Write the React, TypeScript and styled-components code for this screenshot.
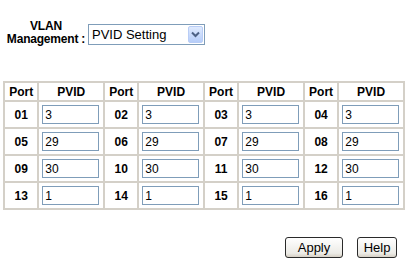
import React from "react";
import styled, { createGlobalStyle } from "styled-components";

const GlobalStyle = createGlobalStyle`
  body {
    margin: 0;
    background: #ffffff;
    font-family: "Liberation Sans", Arial, sans-serif;
  }
`;

const Page = styled.div`
  width: 407px;
  padding: 20px 0 0 3px;
  box-sizing: border-box;
`;

const SelectRow = styled.div`
  display: flex;
  align-items: center;
  padding-left: 3px;
`;

const Label = styled.div`
  width: 80px;
  font-size: 12px;
  font-weight: 700;
  line-height: 13px;
  text-align: center;
  color: #000;
  margin-right: 2px;
  letter-spacing: -0.2px;
`;

const SelectBox = styled.div`
  display: flex;
  align-items: center;
  width: 117px;
  height: 21px;
  box-sizing: border-box;
  border: 1px solid #7f9db9;
  background: #fff;
  padding: 1px;
  margin-top: 2px;
`;

const SelectText = styled.span`
  flex: 1;
  font-size: 13px;
  padding-left: 2px;
  color: #000;
`;

const DropButton = styled.span`
  width: 15px;
  height: 17px;
  box-sizing: border-box;
  border: 1px solid #b9cdf6;
  border-radius: 2px;
  background: linear-gradient(#dfeafe, #b6cdf9);
  display: flex;
  align-items: center;
  justify-content: center;
`;

const Table = styled.table`
  margin-top: 35px;
  border: 1px solid #d4d0c8;
  border-spacing: 0;
  border-collapse: separate;
  width: 402px;
`;

const Head = styled.th`
  border: 1px solid #d4d0c8;
  font-size: 12px;
  font-weight: 700;
  height: 17px;
  padding: 0;
  width: ${(p: { $wide?: boolean }) => (p.$wide ? "64px" : "33px")};
`;

const PortCell = styled.td`
  border: 1px solid #d4d0c8;
  font-size: 12px;
  font-weight: 700;
  text-align: center;
  height: 25px;
  padding: 0;
`;

const InputCell = styled.td`
  border: 1px solid #d4d0c8;
  padding: 0 0 0 3px;
`;

const PvidInput = styled.input`
  width: 57px;
  height: 19px;
  box-sizing: border-box;
  border: 1px solid #7f9db9;
  font-family: "Liberation Sans", Arial, sans-serif;
  font-size: 12px;
  padding: 0 2px;
  color: #000;
  outline: none;
`;

const ButtonRow = styled.div`
  display: flex;
  justify-content: flex-end;
  gap: 14px;
  padding-right: 10px;
  margin-top: 27px;
`;

const Button = styled.button`
  height: 21px;
  width: ${(p: { $w: number }) => p.$w}px;
  border: 1px solid #2a2a2a;
  border-radius: 3px;
  background: linear-gradient(#ffffff, #ecebe6 80%, #d6d0c5);
  font-family: "Liberation Sans", Arial, sans-serif;
  font-size: 13px;
  color: #000;
  padding: 0;
`;

const rows = [
  [["01", "3"], ["02", "3"], ["03", "3"], ["04", "3"]],
  [["05", "29"], ["06", "29"], ["07", "29"], ["08", "29"]],
  [["09", "30"], ["10", "30"], ["11", "30"], ["12", "30"]],
  [["13", "1"], ["14", "1"], ["15", "1"], ["16", "1"]],
];

export default function App() {
  return (
    <Page>
      <GlobalStyle />
      <SelectRow>
        <Label>
          VLAN
          <br />
          Management :
        </Label>
        <SelectBox>
          <SelectText>PVID Setting</SelectText>
          <DropButton>
            <svg width="9" height="7" viewBox="0 0 9 7">
              <path d="M1 1.5 L4.5 5 L8 1.5" fill="none" stroke="#4d6185" strokeWidth="2" />
            </svg>
          </DropButton>
        </SelectBox>
      </SelectRow>
      <Table>
        <thead>
          <tr>
            {[0, 1, 2, 3].map((i) => (
              <React.Fragment key={i}>
                <Head>Port</Head>
                <Head $wide>PVID</Head>
              </React.Fragment>
            ))}
          </tr>
        </thead>
        <tbody>
          {rows.map((r, ri) => (
            <tr key={ri}>
              {r.map(([port, val]) => (
                <React.Fragment key={port}>
                  <PortCell>{port}</PortCell>
                  <InputCell>
                    <PvidInput defaultValue={val} />
                  </InputCell>
                </React.Fragment>
              ))}
            </tr>
          ))}
        </tbody>
      </Table>
      <ButtonRow>
        <Button $w={58}>Apply</Button>
        <Button $w={40}>Help</Button>
      </ButtonRow>
    </Page>
  );
}
